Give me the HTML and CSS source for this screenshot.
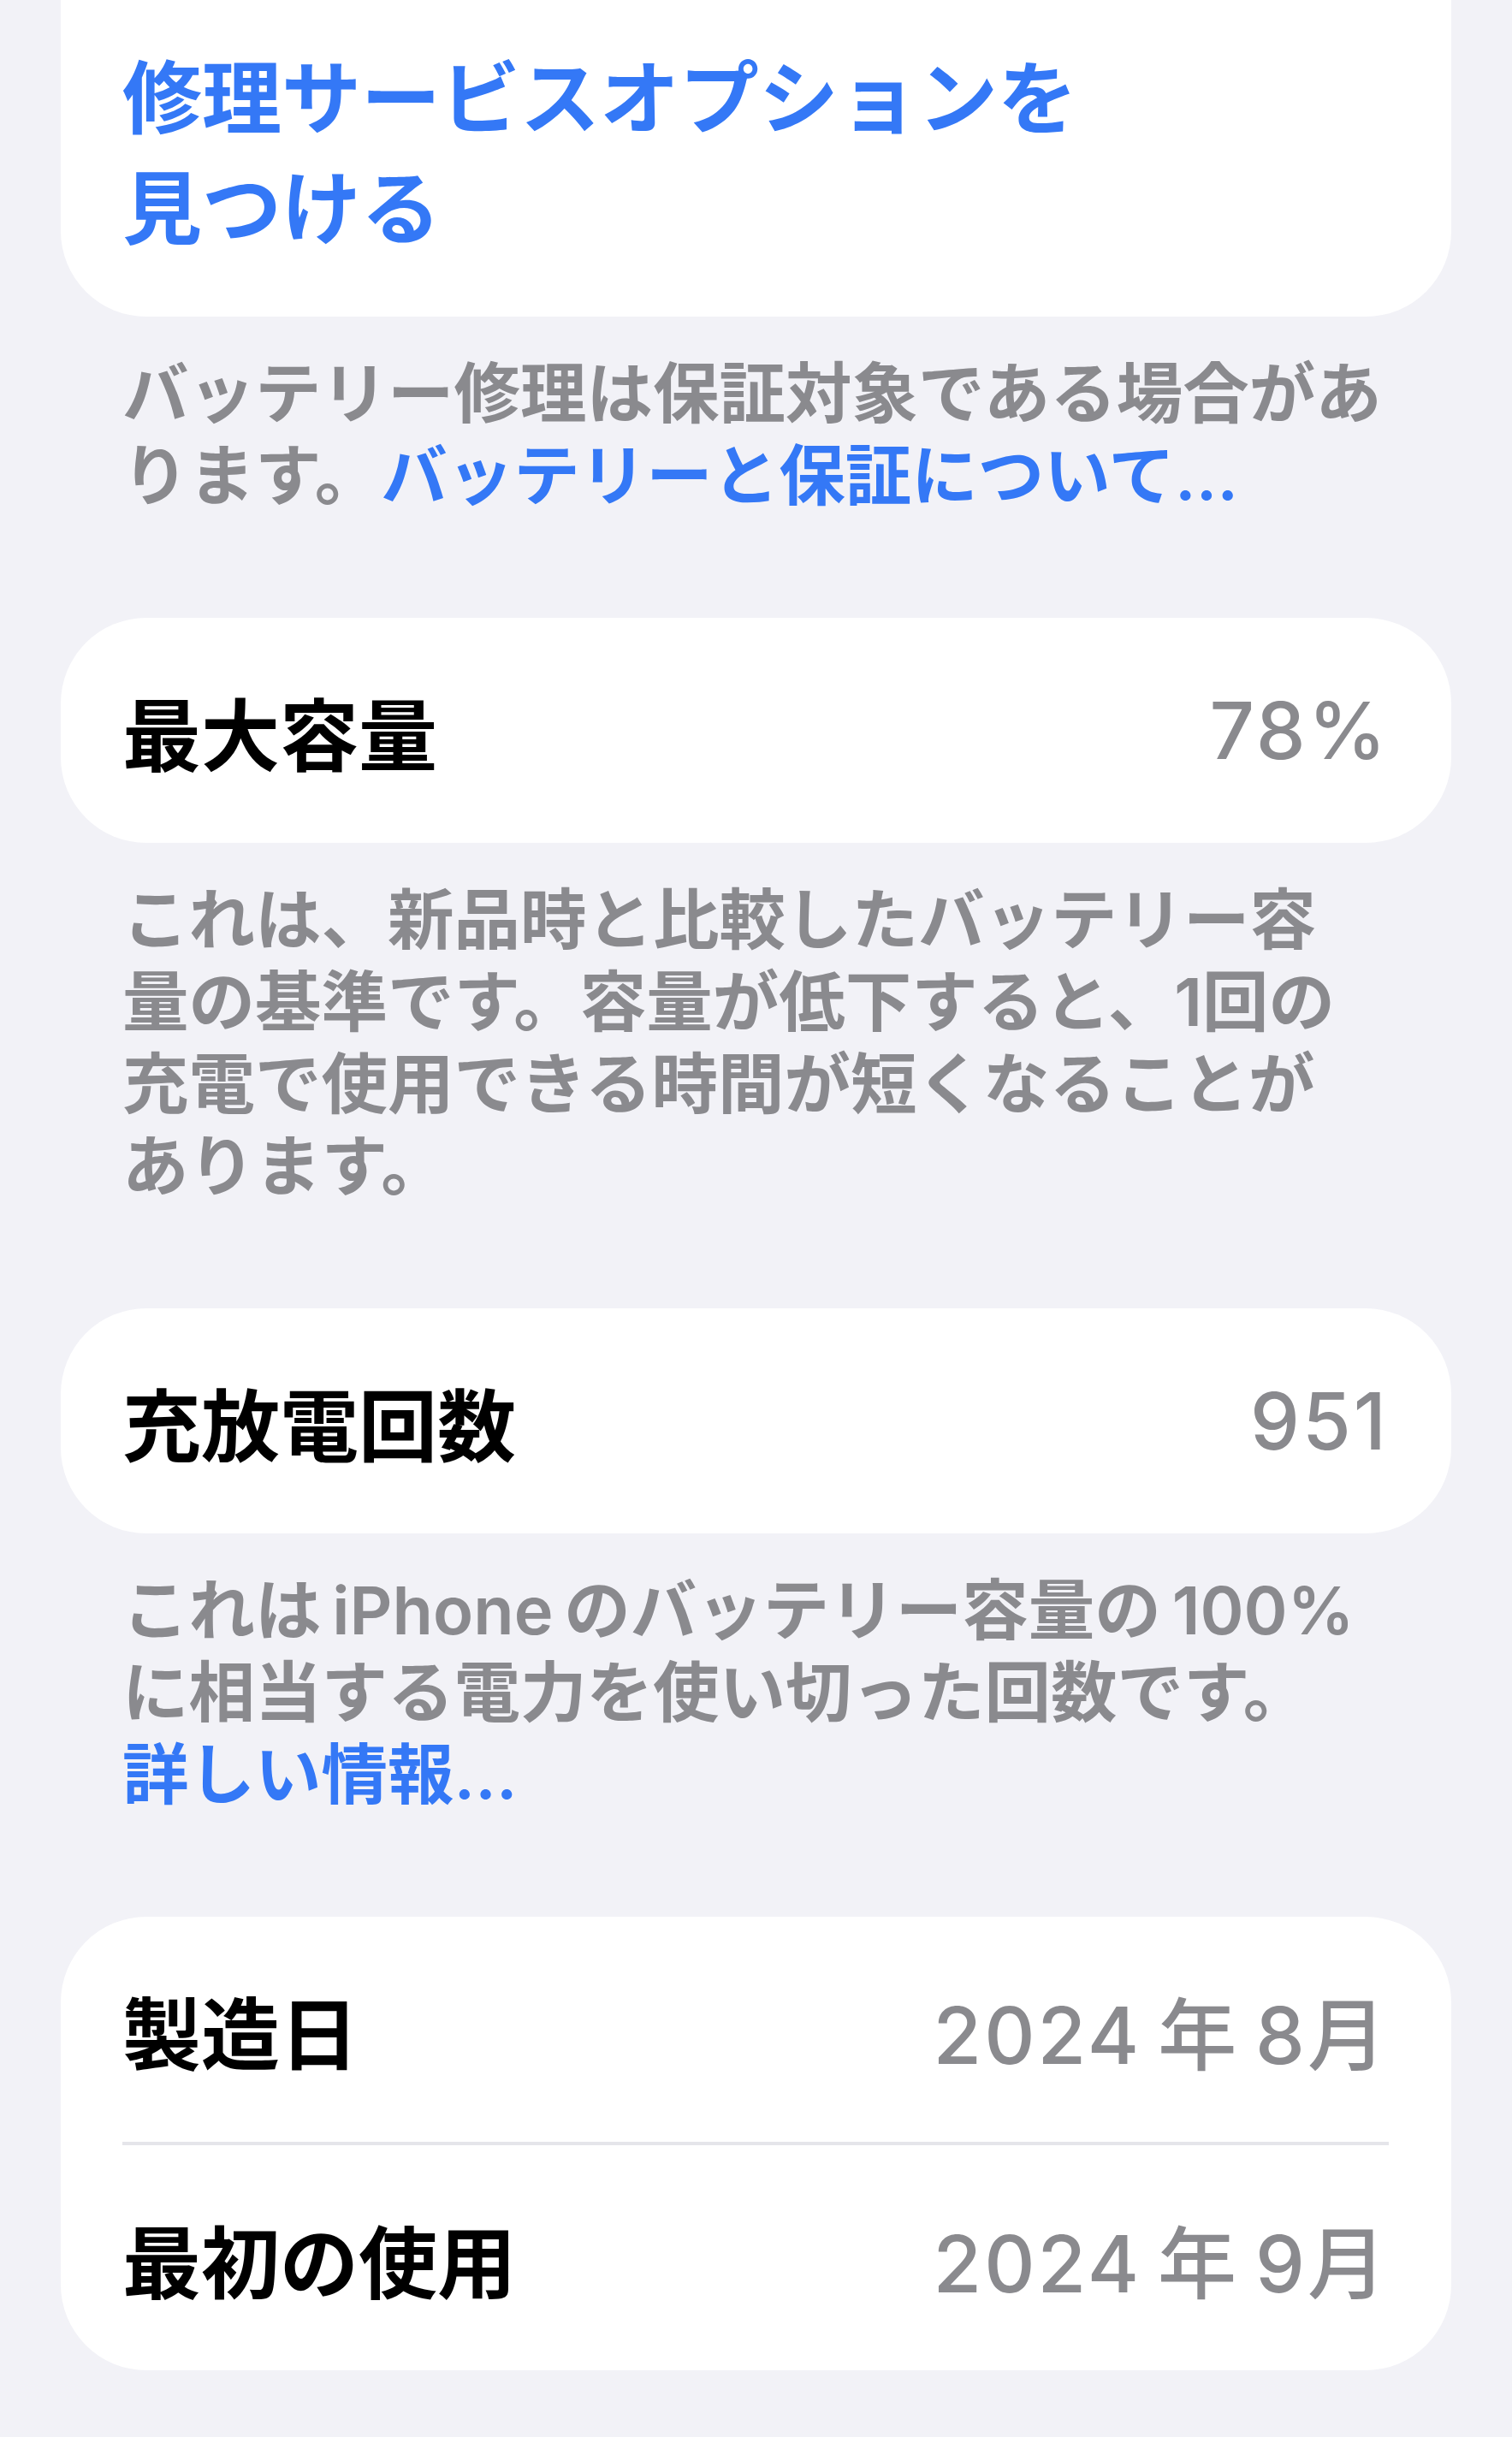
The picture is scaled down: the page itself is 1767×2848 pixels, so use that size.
FILE: index.html
```html
<!DOCTYPE html>
<html lang="ja">
<head>
    <meta charset="UTF-8">
    <title>バッテリーの状態</title>
    <link rel="stylesheet" href="styles.css">
</head>
<body>
    <div class="screen">
        <section class="group">
            <div class="card card-top">
                <a class="card-link">修理サービスオプションを<br>見つける</a>
            </div>
            <p class="note">バッテリー修理は保証対象である場合があ<br>ります。<a class="link">バッテリーと保証について…</a></p>
        </section>

        <section class="group">
            <div class="card">
                <div class="row">
                    <span class="label">最大容量</span>
                    <span class="value">78%</span>
                </div>
            </div>
            <p class="note">これは、新品時と比較したバッテリー容<br>量の基準です。容量が低下すると、1回の<br>充電で使用できる時間が短くなることが<br>あります。</p>
        </section>

        <section class="group">
            <div class="card">
                <div class="row">
                    <span class="label">充放電回数</span>
                    <span class="value">951</span>
                </div>
            </div>
            <p class="note">これは&thinsp;iPhone&thinsp;のバッテリー容量の&thinsp;100%<br>に相当する電力を使い切った回数です。<br><a class="link">詳しい情報…</a></p>
        </section>

        <section class="group">
            <div class="card">
                <div class="row">
                    <span class="label">製造日</span>
                    <span class="value">2024&thinsp;年&thinsp;8月</span>
                </div>
                <div class="row">
                    <span class="label">最初の使用</span>
                    <span class="value">2024&thinsp;年&thinsp;9月</span>
                </div>
            </div>
        </section>
    </div>
</body>
</html>
```

FILE: styles.css
```css
body {
    margin: 0;
    background-color: #f2f2f7;
    font-family: Inter, "Noto Sans CJK JP", sans-serif;
}
.screen {
    padding: 0 71px;
}
.group {
    margin-bottom: 118px;
}
.card {
    background-color: white;
    border-radius: 100px;
    padding: 0 73px 0 72px;
}
.card-top {
    border-radius: 0 0 100px 100px;
    padding-top: 51px;
    padding-bottom: 61px;
}
.card-link {
    display: block;
    font-size: 93px;
    line-height: 129px;
    font-weight: 700;
    color: #3478f6;
}
.row {
    display: flex;
    justify-content: space-between;
    align-items: center;
    height: 263px;
    font-size: 92px;
}
.row + .row {
    border-top: 4px solid #e5e5ea;
}
.label {
    font-weight: 700;
    color: #000;
}
.value {
    font-weight: 500;
    letter-spacing: 3px;
    color: #8a8a8e;
}
.note {
    margin: 42px 0 0;
    padding: 0 30px 0 72px;
    font-size: 77.5px;
    line-height: 96px;
    font-weight: 600;
    color: #8a8a8e;
}
.link {
    font-weight: 600;
    color: #3478f6;
}
```
